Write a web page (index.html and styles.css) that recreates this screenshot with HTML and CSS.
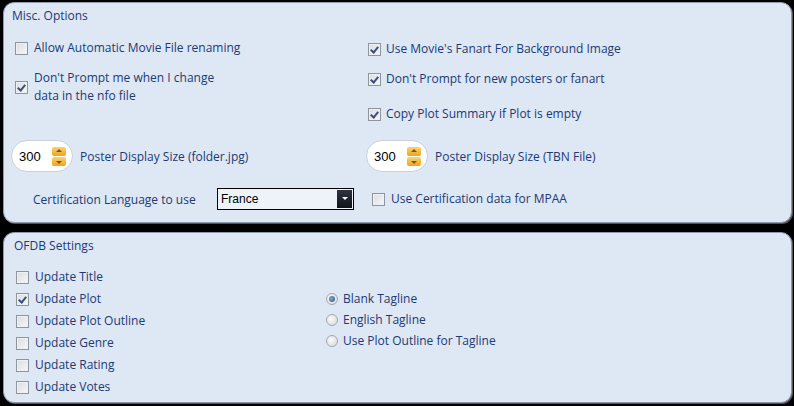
FILE: index.html
```html
<!DOCTYPE html>
<html lang="en">
<head>
    <meta charset="UTF-8">
    <title>Options</title>
    <link rel="stylesheet" href="styles.css">
</head>
<body>

    <div class="painel misc">
        <div class="titulo">Misc. Options</div>

        <div class="colunas">
            <div class="coluna esquerda">
                <label class="opcao item1"><span class="caixa"></span>Allow Automatic Movie File renaming</label>
                <label class="opcao item2"><span class="caixa marcada"></span><span>Don't Prompt me when I change<br>data in the nfo file</span></label>
            </div>
            <div class="coluna direita">
                <label class="opcao d1"><span class="caixa marcada"></span>Use Movie's Fanart For Background Image</label>
                <label class="opcao d2"><span class="caixa marcada"></span>Don't Prompt for new posters or fanart</label>
                <label class="opcao d3"><span class="caixa marcada"></span>Copy Plot Summary if Plot is empty</label>
            </div>
        </div>

        <div class="linha spin-linha">
            <div class="metade">
                <div class="spin">
                    <span class="valor">300</span>
                    <span class="setas"><span class="seta cima"></span><span class="seta baixo"></span></span>
                </div>
                <span class="rotulo">Poster Display Size (folder.jpg)</span>
            </div>
            <div class="metade">
                <div class="spin">
                    <span class="valor">300</span>
                    <span class="setas"><span class="seta cima"></span><span class="seta baixo"></span></span>
                </div>
                <span class="rotulo">Poster Display Size (TBN File)</span>
            </div>
        </div>

        <div class="linha cert-linha">
            <div class="metade">
                <span class="rotulo cert">Certification Language to use</span>
                <div class="combo">
                    <span class="combo-texto">France</span>
                    <span class="combo-botao"></span>
                </div>
            </div>
            <div class="metade">
                <label class="opcao mpaa"><span class="caixa"></span>Use Certification data for MPAA</label>
            </div>
        </div>
    </div>

    <div class="painel ofdb">
        <div class="titulo">OFDB Settings</div>

        <div class="colunas">
            <div class="coluna lista">
                <label class="opcao"><span class="caixa"></span>Update Title</label>
                <label class="opcao"><span class="caixa marcada"></span>Update Plot</label>
                <label class="opcao"><span class="caixa"></span>Update Plot Outline</label>
                <label class="opcao"><span class="caixa"></span>Update Genre</label>
                <label class="opcao"><span class="caixa"></span>Update Rating</label>
                <label class="opcao"><span class="caixa"></span>Update Votes</label>
            </div>
            <div class="coluna radios">
                <label class="opcao"><span class="radio ativo"></span>Blank Tagline</label>
                <label class="opcao"><span class="radio"></span>English Tagline</label>
                <label class="opcao"><span class="radio"></span>Use Plot Outline for Tagline</label>
            </div>
        </div>
    </div>

</body>
</html>
```

FILE: styles.css
```css
html {
    background-color: #000;
}

body {
    margin: 0;
    width: 794px;
    height: 406px;
    overflow: hidden;
    font-family: 'Open Sans', 'Liberation Sans', sans-serif;
    font-size: 12px;
    color: #203a74;
}

.painel {
    box-sizing: border-box;
    width: 789px;
    margin-left: 3px;
    background-color: #dee7f4;
    border: 1px solid #8d99ab;
    border-radius: 11px;
    box-shadow: 1px 1px 0 #555;
}

.misc {
    margin-top: 2px;
    height: 221px;
    padding: 4px 0 0 8px;
}

.ofdb {
    margin-top: 9px;
    height: 171px;
    padding: 4px 0 0 10px;
}

.titulo {
    line-height: 18px;
}

.colunas {
    display: flex;
}

.coluna {
    display: flex;
    flex-direction: column;
    align-items: flex-start;
}

.opcao {
    display: flex;
    align-items: center;
    gap: 6px;
    line-height: 18px;
}

/* painel misc */
.esquerda {
    width: 353px;
    padding-left: 3px;
}

.item1 {
    margin-top: 14px;
}

.item2 {
    margin-top: 12px;
}

.direita .opcao {
    gap: 5px;
}

.d1 {
    margin-top: 15px;
}

.d2 {
    margin-top: 12px;
}

.d3 {
    margin-top: 17px;
}

.linha {
    display: flex;
}

.metade {
    display: flex;
    align-items: center;
}

.metade:first-child {
    width: 355px;
}

.spin-linha {
    margin-top: 17px;
    margin-left: -1px;
}

.cert-linha {
    margin-top: 16px;
    height: 22px;
}

.spin {
    box-sizing: border-box;
    width: 62px;
    height: 32px;
    background-color: #fff;
    border: 1px solid #c9d0da;
    border-radius: 16px;
    display: flex;
    align-items: center;
    padding-left: 7px;
    color: #000;
    font-family: 'Liberation Sans', sans-serif;
    font-size: 13px;
}

.valor {
    width: 33px;
}

.setas {
    display: flex;
    flex-direction: column;
    gap: 1px;
}

.seta {
    position: relative;
    width: 14px;
    height: 9px;
    border-radius: 2px;
    background: linear-gradient(#ffd36b, #f0a21c);
}

.seta::after {
    content: '';
    position: absolute;
    left: 4px;
    border-left: 3px solid transparent;
    border-right: 3px solid transparent;
}

.cima::after {
    top: 2px;
    border-bottom: 3px solid #6b5a3a;
}

.baixo::after {
    top: 4px;
    border-top: 3px solid #6b5a3a;
}

.spin + .rotulo {
    margin-left: 7px;
}

.cert {
    margin-left: 21px;
    width: 184px;
}

.combo {
    box-sizing: border-box;
    width: 137px;
    height: 22px;
    background-color: #eef3fa;
    border: 1px solid #000;
    display: flex;
    align-items: center;
    color: #000;
    font-family: 'Liberation Sans', sans-serif;
    font-size: 12px;
}

.combo-texto {
    flex: 1;
    padding-left: 3px;
}

.combo-botao {
    position: relative;
    width: 15px;
    height: 18px;
    margin-right: 1px;
    background: linear-gradient(#2c3340, #10141b);
}

.combo-botao::after {
    content: '';
    position: absolute;
    left: 5px;
    top: 7px;
    border-left: 3px solid transparent;
    border-right: 3px solid transparent;
    border-top: 3px solid #fff;
}

.mpaa {
    margin-left: 5px;
}

/* caixas */
.caixa {
    box-sizing: border-box;
    width: 13px;
    height: 13px;
    flex-shrink: 0;
    border: 1px solid #8f959c;
    background: linear-gradient(135deg, #d9dde2, #f6f7f8);
    box-shadow: inset 0 0 0 1px #eef0f2;
    position: relative;
}

.marcada::after {
    content: '';
    position: absolute;
    left: 3px;
    top: 1px;
    width: 3px;
    height: 6px;
    border-right: 2px solid #3b4f7a;
    border-bottom: 2px solid #3b4f7a;
    transform: rotate(40deg);
}

.radio {
    box-sizing: border-box;
    width: 12px;
    height: 12px;
    flex-shrink: 0;
    border-radius: 50%;
    border: 1px solid #a3a9b0;
    background: radial-gradient(circle at 40% 40%, #fafafa, #d3d7dc);
    position: relative;
}

.ativo::after {
    content: '';
    position: absolute;
    left: 2px;
    top: 2px;
    width: 6px;
    height: 6px;
    border-radius: 50%;
    background: radial-gradient(circle at 40% 40%, #8aa3c8, #31507f);
}

/* painel ofdb */
.lista {
    width: 310px;
    padding-left: 2px;
    margin-top: 13px;
    gap: 4px;
}

.radios {
    margin-top: 35px;
    gap: 3px;
}

.radios .opcao {
    gap: 5px;
}
```
